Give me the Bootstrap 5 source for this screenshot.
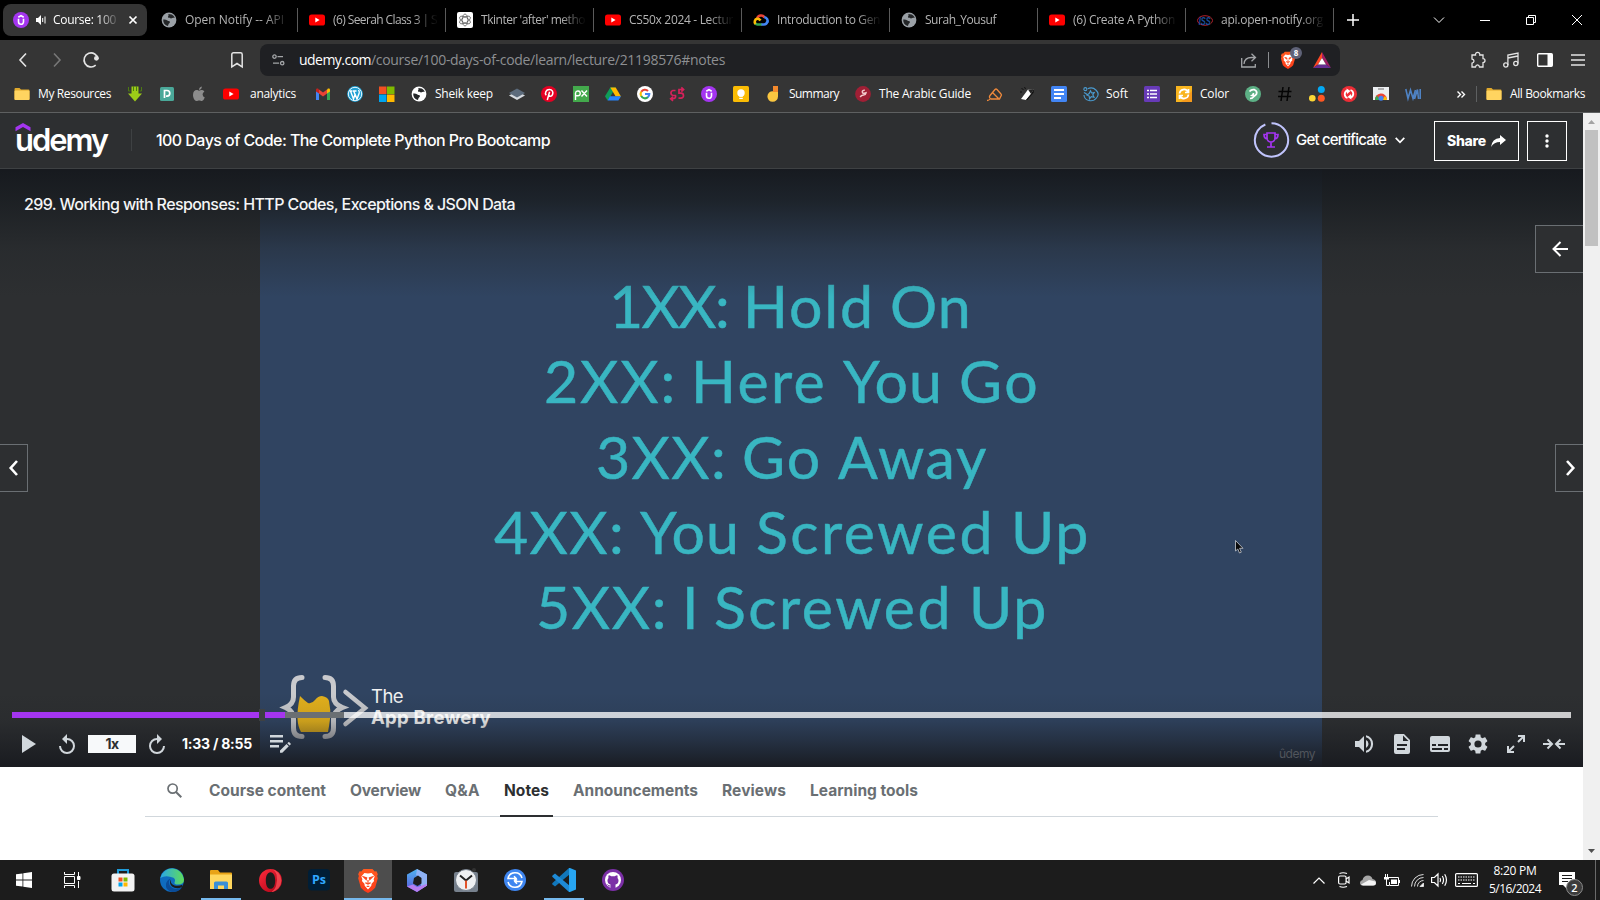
<!DOCTYPE html>
<html lang="en">
<head>
<meta charset="utf-8">
<title>Course: 100 Days of Code</title>
<link href="https://cdn.jsdelivr.net/npm/bootstrap@5.3.0/dist/css/bootstrap.min.css" rel="stylesheet">
<style>
body{width:1600px;height:900px;overflow:hidden;font-family:"Open Sans","Noto Sans",sans-serif;font-size:12px;line-height:16px;background:#fff}
svg{display:block;flex:none;overflow:visible}
.fit{white-space:nowrap;display:block;flex:none}
.line-ic{fill:none;stroke:currentColor}
/* pixel steps for start margins */
.m5{margin-left:5px}.m7{margin-left:7px}.m8{margin-left:8px}.m10{margin-left:10px}.m11{margin-left:11px}
.m13{margin-left:13px}.m14{margin-left:14px}.m15{margin-left:15px}.m16{margin-left:16px}.m17{margin-left:17px}
.m18{margin-left:18px}.m19{margin-left:19px}.m20{margin-left:20px}.m21{margin-left:21px}.m22{margin-left:22px}.m23{margin-left:23px}
.m24{margin-left:24px}.m26{margin-left:26px}.m36{margin-left:36px}.m75{margin-left:75px}.m130{margin-left:130px}.m132{margin-left:132px}
/* tab strip */
.tabstrip{height:40px;background:#000;color:#b4b4b4}
.tab{width:148px;height:40px;padding-left:12px;position:relative}
.tab::after{content:"";position:absolute;right:-1px;top:8px;width:1px;height:24px;background:#5a5a5a}
.tab .fade-text{width:104px;margin-left:8px;overflow:hidden;-webkit-mask-image:linear-gradient(90deg,#000 80px,rgba(0,0,0,.08) 102px)}
.tab-active{width:144px;height:32px;margin:0 2px 0 3px;background:#353535;border-radius:8px;color:#fff;padding-left:10px}
.tab-active .fade-text{width:66px;margin-left:6px;overflow:hidden;-webkit-mask-image:linear-gradient(90deg,#000 44px,rgba(0,0,0,.15) 64px)}
.win{color:#fff}
/* toolbar */
.toolbar{height:40px;background:#353535;color:#e4e4e4}
.urlbar{width:1080px;height:32px;border-radius:8px;background:#1f2023;font-size:14px;color:#8d8f92;padding:0 9px 0 12px}
.dim{color:#777}
.soft{color:#a3a5a8}
.tick{width:1px;height:16px;background:#8b8d90;margin:0 11px 0 12px}
.shield{margin-right:17px}
.count{left:10px;top:-4px;width:12px;height:12px;background:#5f6278;color:#fff;font-size:8px;font-weight:700;line-height:12px}
.marks{height:32px;background:#353535;color:#fff;padding:0 15px 4px 14px}
.marks .gp{margin-right:16px}
.marks .fit{margin-left:8px;margin-right:16px}
.marks .fit.wide{margin:0 19px 0 11px}
.marks .fit.last{margin-right:0}
.more{margin-right:11px}
.bar{width:1px;height:16px;background:#5e6061;margin-right:9px}
.seam{height:1px;background:#5e6061}
.grey{color:#9aa0a6}
/* course page */
.page-col{width:1583px;height:747px;font-family:Inter,"Liberation Sans",sans-serif}
.course-head{height:56px;background:#2d2f31;border-bottom:1px solid #3e4143;color:#fff;font-size:16px;font-weight:500;line-height:20px;padding-bottom:1px}
.cert{font-size:15px}
.brand{width:92px;height:50px;position:relative;font-size:31px;font-weight:600;line-height:36px;padding-top:7px}
.brand svg{position:absolute;left:0;top:7px}
.vsep{width:1px;height:22px;background:#3e4143}
.caret{margin:0 29px 0 9px}
.box-btn{height:40px;width:40px;margin:1px 16px 0 0;border:1px solid #fff;border-radius:0;color:#fff;padding:0;font-size:15px;font-weight:800}
.box-btn.share{width:85px;margin-right:8px;font-size:14px}
.player{height:598px;background:#2d2f31;color:#fff;overflow:hidden}
.slide{width:1062px;height:598px;margin-left:260px;background:#304461;padding-top:99px;color:#39b6c2;font-family:Lato,sans-serif;font-size:59px;line-height:75.25px;-webkit-text-stroke:.5px #39b6c2}
.shade{left:0;right:0}
.shade-t{top:0;height:128px;background:linear-gradient(rgba(22,25,30,.97),rgba(26,30,34,.85) 25%,rgba(34,38,42,.4) 62%,rgba(45,47,49,0))}
.shade-b{bottom:0;height:74px;background:linear-gradient(rgba(24,26,31,0),rgba(24,26,31,.12) 38%,rgba(24,26,31,.45) 64%,rgba(24,26,31,.95))}
.lecture{left:24px;top:25px;font-size:16px;font-weight:500;line-height:20px;color:#f4f5f6}
.edge{background:#2d2f31;border:1px solid #6a6f73;height:48px;border-radius:0}
.edge-back{right:0;top:56px;width:48px;border-right:0}
.edge-l{left:0;top:275px;width:28px;border-left:0}
.edge-r{right:0;top:275px;width:28px;border-right:0;padding-left:10px}
.pointer{left:1235px;top:371px}
.brew{left:283px;top:505px;color:#f2f2f2;font-size:18.5px;line-height:21px}
.brew-name{margin:12px 0 0 2px}
.track{left:12px;right:12px;top:543px;height:6px}
.track i{display:block;height:6px}
.track .done{background:#a435f0}
.track .knob{height:12px;background:#3e4143}
.track .buffer{background:#6a6f73}
.track .rest{background:rgba(255,255,255,.76)}
.controls{left:0;right:0;top:563px;height:24px;color:#d1d7dc;font-size:14px;font-weight:700}
.rate{width:48px;height:18px;background:#f7f9fa;color:#2d2f31;line-height:18px}
.shrink{margin:0 18px}
.wm{left:1279px;top:578px;font-size:12px;line-height:14px;color:#51555c}
.subtabs{width:1293px;margin-left:145px;height:50px;border-bottom:1px solid #d1d7dc;color:#6a6f73;font-size:15.5px;font-weight:700;line-height:20px;padding:14px 0 0 22px}
.subtabs .fit{margin-right:24px}
.subtabs svg{margin:2px 27px 0 0}
.subtabs .on{color:#2d2f31}
.subtabs .on::after{content:"";position:absolute;left:-4px;right:-4px;top:34px;height:2px;background:#2d2f31}
/* scrollbar */
.sbar{width:17px;height:747px;background:#f0f0f0}
.sbar .up{margin:7px 0 6px}
.sbar .down{margin-bottom:7px}
.thumb{width:13px;height:116px;background:#c1c1c1}
/* taskbar */
.taskbar{height:40px;background:#1c1c1c;color:#fff}
.app{width:48px;height:40px;position:relative;margin-left:1px}
.app.sys{margin-left:0}
.app.first{margin-left:3px}
.app.run::after{content:"";position:absolute;left:4px;right:4px;bottom:0;height:2px;background:#76b9ed}
.app.cur{background:#4d4d4d}
.app.cur::after{left:0;right:0}
.clock{width:60px;line-height:18px}
.notes-ic{margin:0 20px 0 14px}
.notes-n{left:7px;top:7px;width:17px;height:17px;background:#3c3c3c;border:1px solid #8b8b8b;font-size:11px;font-weight:600;line-height:15px}
.peek{width:1px;height:40px;background:#6a6a6a;margin-right:4px}
</style>
</head>
<body>
<svg width="0" height="0" class="position-absolute">
<defs>
<symbol id="yt" viewBox="0 0 16 16"><rect y="2.4" width="16" height="11.2" rx="2.6" fill="#f00"/><path d="M6.3 5.5v5l4.3-2.5z" fill="#fff"/></symbol>
<symbol id="globe" viewBox="0 0 16 16"><circle cx="8" cy="8" r="7.4" fill="currentColor"/><path d="M2.2 7.6c1.8-.2 3.2.1 4.2 1 1 .8 2.300.2 2.500 1.400.2 1.300-1.300 1.200-1.500 2.400-.1.700-.3 1.300-.9 1.600C3.800 13.200 2 11 2.200 7.600zM7.200 2.100l3.600.5c1.500.8 2.500 1.900 2.900 3.300-1.200-.3-2.400-.3-3.200.4-.9.700-.9-.8-2-.6-1.400.3-1.900-.7-1.300-1.500.5-.6.400-1.300 0-2.100z" fill="#242628"/></symbol>
<symbol id="folder" viewBox="0 0 16 16"><path d="M.5 3q0-1 1-1h4l1.500 1.500h7.500q1 0 1 1V13q0 1-1 1h-13q-1 0-1-1z" fill="#e0a92c"/><path d="M.5 5.500q0-1 1-1h13q1 0 1 1V13q0 1-1 1h-13q-1 0-1-1z" fill="#ffd460"/></symbol>
<symbol id="udm" viewBox="0 0 16 16"><circle cx="8" cy="8" r="8" fill="#a435f0"/><path d="M5.300 5.200L8 3.600l2.700 1.600M5.500 6.700v3.100a2.500 2.500 0 0 0 5 0V6.700" fill="none" stroke="#fff" stroke-width="1.600"/></symbol>
<linearGradient id="lion" x2="0" y2="1"><stop stop-color="#ff5a1f"/><stop offset="1" stop-color="#fb3a1a"/></linearGradient>
<symbol id="brave" viewBox="0 0 24 28"><path d="M7 1h10l2.500 3 2-.3L23 7l-.8 2 .8 2.500-3 10.500q-3 3.500-8 6-5-2.500-8-6L1 11.500 1.800 9 1 7l1.500-3.300 2 .3z" fill="url(#lion)"/><path d="M8 5.500l4 .7 4-.7 3.500 4-1.200 3 .5 2-2.800 3-.3 2.500L12 24l-3.700-4-.3-2.500-2.800-3 .5-2-1.200-3z" fill="#fff"/><path d="M7 10l3.500 1-.5 2zM17 10l-3.500 1 .5 2zM12 13.500v3M9 16.500l3 1.500 3-1.500M10.500 20.500h3" stroke="#fb4a1f" stroke-width="1.300" fill="#fb4a1f"/></symbol>
</defs>
</svg>

<div class="tabstrip d-flex align-items-center">
  <div class="tab-active d-flex align-items-center">
    <svg width="16" height="16"><use href="#udm"/></svg>
    <svg class="m7" width="11" height="12" viewBox="0 0 11 12"><path d="M0 4h2l3-3v10L2 8H0z" fill="#fff"/><path d="M6.700 4v4M9 2.500v7" stroke="#fff" fill="none"/></svg>
    <div class="fade-text"><span class="fit" data-w="63">Course: 100</span></div>
    <svg class="line-ic m10" width="8" height="8" viewBox="0 0 8 8" stroke-width="1.700"><path d="M.5.5l7 7M7.500.5l-7 7"/></svg>
  </div>
  <div class="tab d-flex align-items-center"><svg class="grey" width="16" height="16"><use href="#globe"/></svg><div class="fade-text"><span class="fit" data-w="99">Open Notify -- API</span></div></div>
  <div class="tab d-flex align-items-center"><svg width="16" height="16"><use href="#yt"/></svg><div class="fade-text"><span class="fit" data-w="104">(6) Seerah Class 3 | S</span></div></div>
  <div class="tab d-flex align-items-center"><svg width="16" height="16" viewBox="0 0 16 16"><rect width="16" height="16" rx="2" fill="#fff"/><g fill="none" stroke="#444" stroke-width=".65"><ellipse cx="8" cy="8" rx="2.800" ry="6"/><ellipse cx="8" cy="8" rx="2.800" ry="6" transform="rotate(60 8 8)"/><ellipse cx="8" cy="8" rx="2.800" ry="6" transform="rotate(120 8 8)"/></g></svg><div class="fade-text"><span class="fit" data-w="104">Tkinter 'after' metho</span></div></div>
  <div class="tab d-flex align-items-center"><svg width="16" height="16"><use href="#yt"/></svg><div class="fade-text"><span class="fit" data-w="104">CS50x 2024 - Lectur</span></div></div>
  <div class="tab d-flex align-items-center"><svg width="16" height="16" viewBox="0 0 16 16" fill="none" stroke-width="2.600"><path d="M4.300 6.200A4 4 0 0 1 11.500 5.500" stroke="#ea4335"/><path d="M11.200 5.200a3.600 3.600 0 0 1 3 5.300" stroke="#4285f4"/><path d="M14.300 9.500q-.6 3-3.300 3H8" stroke="#4285f4"/><path d="M8.500 12.500H4.500q-1.500 0-2.400-1.200" stroke="#34a853"/><path d="M2.500 12A3.200 3.200 0 0 1 4 6.800q2-.3 3.500 1.800" stroke="#fbbc05"/></svg><div class="fade-text"><span class="fit" data-w="103">Introduction to Gen</span></div></div>
  <div class="tab d-flex align-items-center"><svg class="grey" width="16" height="16"><use href="#globe"/></svg><div class="fade-text"><span class="fit" data-w="71">Surah_Yousuf</span></div></div>
  <div class="tab d-flex align-items-center"><svg width="16" height="16"><use href="#yt"/></svg><div class="fade-text"><span class="fit" data-w="102">(6) Create A Python</span></div></div>
  <div class="tab d-flex align-items-center"><svg width="16" height="16" viewBox="0 0 16 16"><ellipse cx="8" cy="8.500" rx="7.500" ry="4.800" fill="none" stroke="#b3202c"/><text x="1.800" y="12.500" font-size="11" font-weight="700" font-style="italic" fill="#1c4f9c" textLength="12" lengthAdjust="spacingAndGlyphs" font-family="Liberation Sans">ISS</text></svg><div class="fade-text"><span class="fit" data-w="102">api.open-notify.org</span></div></div>
  <svg class="line-ic win m14" width="12" height="12" viewBox="0 0 12 12" stroke-width="1.500"><path d="M6 0v12M0 6h12"/></svg>
  <svg class="line-ic win m75" width="10" height="6" viewBox="0 0 10 6"><path d="M0 .5l5 5 5-5"/></svg>
  <svg class="line-ic win m36" width="10" height="10" viewBox="0 0 10 10"><path d="M0 5.500h10"/></svg>
  <svg class="line-ic win m36" width="10" height="10" viewBox="0 0 10 10"><path d="M.5 2.500h7v7h-7zM2.500 2.500v-2h7v7h-2"/></svg>
  <svg class="line-ic win m36" width="10" height="10" viewBox="0 0 10 10"><path d="M0 0l10 10M10 0L0 10"/></svg>
</div>

<div class="toolbar d-flex align-items-center">
  <svg class="line-ic m19" width="8" height="14" viewBox="0 0 8 14" stroke-width="1.600"><path d="M7 .5L1 7l6 6.500"/></svg>
  <svg class="line-ic m26 dim" width="8" height="14" viewBox="0 0 8 14" stroke-width="1.600"><path d="M1 .5L7 7l-6 6.500"/></svg>
  <svg class="line-ic m22" width="16" height="16" viewBox="0 0 16 16" stroke-width="1.600"><path d="M12.700 13.200A7 7 0 1 1 15 7"/><circle cx="13.400" cy="6.300" r="1.600" fill="currentColor"/></svg>
  <svg class="line-ic m132" width="12" height="16" viewBox="0 0 12 16" stroke-width="1.500"><path d="M.8 2.500q0-1.700 1.700-1.700h7q1.700 0 1.700 1.700v12.300L6 11.500.8 14.800z"/></svg>
  <div class="urlbar d-flex align-items-center m17">
    <svg class="line-ic soft" width="13" height="12" viewBox="0 0 13 12" stroke-width="1.300"><circle cx="2.500" cy="2.600" r="1.700"/><path d="M5.500 2.600H11M1 9.200h6"/><circle cx="10.200" cy="9.200" r="1.700"/></svg>
    <span class="fit text-white m14" data-w="72">udemy.com</span><span class="fit" data-w="354">/course/100-days-of-code/learn/lecture/21198576#notes</span>
    <svg class="line-ic soft ms-auto" width="15" height="15" viewBox="0 0 15 15" stroke-width="1.300"><path d="M.7 5v9h13.600v-3M3 11q.5-6.500 7.500-6.500h4M10.500.8l4 3.700-4 3.700"/></svg>
    <span class="tick"></span>
    <span class="position-relative shield"><svg width="16" height="18"><use href="#brave"/></svg>
      <span class="count position-absolute rounded-circle text-center">8</span></span>
    <svg width="18" height="16" viewBox="0 0 18 16"><path d="M9 0v6L5 12.500 0 16z" fill="#ff4724"/><path d="M9 0l9 16-5-3.500L9 6z" fill="#9e1f63"/><path d="M0 16l5-3.500h8l5 3.500z" fill="#662d91"/><path d="M9 6l4 6.500H5z" fill="#fff"/></svg>
  </div>
  <svg class="line-ic m130" width="16" height="16" viewBox="0 0 16 16" stroke-width="1.300"><path d="M2 3h3.500a2.200 2.200 0 1 1 4.300 0H13v3.600a2 2 0 1 1 0 4V15H9.500q-.3-2.200-2-2.200T5.500 15H2v-3.800q2-.3 2-2.100T2 7z"/></svg>
  <svg class="line-ic m17" width="16" height="16" viewBox="0 0 16 16" stroke-width="1.300"><circle cx="2.800" cy="13" r="2.100"/><circle cx="12.800" cy="11.500" r="2.100"/><path d="M4.900 13V3L15 1v10.500M4.900 6L15 4"/></svg>
  <svg class="m18" width="16" height="14" viewBox="0 0 16 14"><rect x=".7" y=".7" width="14.600" height="12.600" rx="1" fill="none" stroke="#fff" stroke-width="1.400"/><path d="M10.500 1H15v12h-4.500z" fill="#fff"/></svg>
  <svg class="line-ic m18" width="14" height="12" viewBox="0 0 14 12" stroke-width="1.300"><path d="M0 1h14M0 6h14M0 11h14"/></svg>
</div>

<div class="marks d-flex align-items-center">
  <svg width="16" height="16"><use href="#folder"/></svg><span class="fit" data-w="73">My Resources</span>
  <svg class="gp" width="16" height="16" viewBox="0 0 16 16"><path d="M4.500.5h7v7H15L8 15.500 1 7.500h3.500z" fill="#9ccc18"/><path d="M1.500 1v4h2M14.500 1v4h-2M6.500 0v5M9.500 0v5" stroke="#4c7a12" fill="none"/></svg>
  <svg class="gp" width="16" height="16" viewBox="0 0 16 16"><rect x="1" y="1" width="14" height="14" rx="1.500" fill="#4aa899"/><path d="M5.500 12V4.500H8a2.800 2.800 0 0 1 0 5.600H7" fill="none" stroke="#fff" stroke-width="1.700"/></svg>
  <svg class="gp" width="16" height="16" viewBox="0 0 16 16" fill="#8c8c8c"><path d="M8 4.800c1-.4 2-.9 3.200-.7q1.400.2 2.200 1.400-2 1.300-1.800 3.300.3 2 2.200 2.800Q12.500 15 11 15c-1.200 0-1.600-.6-2.800-.6S6.500 15 5.500 15C3.500 15 2 11.700 2 9c0-3 1.700-4.900 3.700-4.900 1 0 1.700.6 2.300.7zM10.800.5Q11 3.300 8 4 8 1.300 10.800.5z"/></svg>
  <svg width="16" height="16"><use href="#yt"/></svg><span class="fit wide" data-w="46">analytics</span>
  <svg class="gp" width="16" height="16" viewBox="0 0 16 16"><path d="M1 4v10h3V6.500z" fill="#4285f4"/><path d="M15 4v10h-3V6.500z" fill="#34a853"/><path d="M4 3.500l4 3 4-3v4l-4 3-4-3z" fill="#ea4335"/><path d="M1 3.800Q1 2 3 2.600l1 .9v4L1 5.400z" fill="#c5221f"/><path d="M15 3.800Q15 2 13 2.600l-1 .9v4l3-2.100z" fill="#fbbc04"/></svg>
  <svg class="gp" width="16" height="16" viewBox="0 0 16 16"><circle cx="8" cy="8" r="7.900" fill="#1f9fd4"/><circle cx="8" cy="8" r="6.700" fill="none" stroke="#fff" stroke-width=".9"/><path d="M2.500 5h3M3.500 5l3 8L8 8.500 6.700 5M6 5h3.500M8 8l2 5 2.200-6q.3-1.300-.7-3" fill="none" stroke="#fff" stroke-width="1.400"/></svg>
  <svg class="gp" width="16" height="16" viewBox="0 0 16 16"><path d="M0 .5h7.500V8H0z" fill="#f25022"/><path d="M8 .5h7.500V8H8z" fill="#7fba00"/><path d="M0 8.500h7.500V16H0z" fill="#00a4ef"/><path d="M8 8.500h7.500V16H8z" fill="#ffb900"/></svg>
  <svg class="text-white" width="16" height="16"><use href="#globe"/></svg><span class="fit" data-w="58">Sheik keep</span>
  <svg class="gp" width="16" height="16" viewBox="0 0 16 16"><path d="M0 9.500L8 5l8 4.500L8 14z" fill="#d6dbe0"/><path d="M0 7l8-4.500L16 7l-8 4.500z" fill="#5c6b7c"/></svg>
  <svg class="gp" width="16" height="16" viewBox="0 0 16 16"><circle cx="8" cy="8" r="8" fill="#e60023"/><path d="M5.200 9.200C3.500 7 5 3.600 8.300 3.600c3 0 4.300 2.500 3.200 5-1 2.200-3.200 2-3.700.8M8.600 5.800L6.300 14" fill="none" stroke="#fff" stroke-width="1.500"/></svg>
  <svg class="gp" width="16" height="16" viewBox="0 0 16 16"><rect width="16" height="16" fill="#43a94c"/><path d="M2.500 14V7a2.400 2.400 0 1 1 2.400 2.800H2.500M8.500 4.500l5.500 6M14 4.500l-5.500 6" fill="none" stroke="#fff" stroke-width="1.400"/></svg>
  <svg class="gp" width="16" height="16" viewBox="0 0 16 16"><path d="M5.300 1.500h5.400L5 11l-2.400 3.500L0 10.300z" fill="#0f9d58"/><path d="M5.300 1.500h5.400l5.300 9h-5.300z" fill="#ffba00"/><path d="M5 10.300h11l-2.600 4.200H2.600z" fill="#2684fc"/></svg>
  <svg class="gp" width="16" height="16" viewBox="0 0 16 16"><circle cx="8" cy="8" r="8" fill="#fff"/><g fill="none" stroke-width="2.100"><path d="M4.300 5.800A4.300 4.300 0 0 1 11 4.900" stroke="#ea4335"/><path d="M4.200 10.100a4.300 4.300 0 0 1 0-4.300" stroke="#fbbc05"/><path d="M11 11.100a4.300 4.300 0 0 1-6.800-1" stroke="#34a853"/><path d="M8 8h4.300q0 2-1.500 3.200" stroke="#4285f4"/></g></svg>
  <svg class="gp" width="16" height="16" viewBox="0 0 16 16" fill="none" stroke="#d6215b" stroke-width="1.700"><path d="M6.500 4.500H3.800a2.600 2.600 0 0 0 0 5H6.500q.8 3.200-3 3.200H2M4 10.800l-2.300 2L4 14.800M14.500 3.500H10v3.700h2a2.500 2.500 0 0 1 0 5H9.500M12.300 1.300l2.300 2.200-2.300 2.200"/></svg>
  <svg class="gp" width="16" height="16"><use href="#udm"/></svg>
  <svg class="gp" width="16" height="16" viewBox="0 0 16 16"><rect width="16" height="16" rx="1.500" fill="#fbbc04"/><circle cx="8" cy="7" r="3.700" fill="#fff"/><path d="M6.200 9h3.600v1.800H6.200zM6.200 11.700h3.600V13H6.200z" fill="#fff"/></svg>
  <svg width="16" height="16" viewBox="0 0 16 16"><path d="M8 0h5v10.500A5.300 5.300 0 1 1 8 5.200z" fill="#fbc740"/><path d="M8 0h5v6H8z" fill="#f58a2c"/></svg><span class="fit" data-w="50">Summary</span>
  <svg width="16" height="16" viewBox="0 0 16 16"><circle cx="8" cy="8" r="7.900" fill="#a01f35"/><path d="M9.800 4.300Q7.300 4 7.300 5.800T9.300 7.200l1.700-.4q-.3 2-2.500 2.300-2.300.3-3.300 1.900" fill="none" stroke="#f3c9cc" stroke-width="1.500"/></svg><span class="fit" data-w="92">The Arabic Guide</span>
  <svg class="gp" width="16" height="16" viewBox="0 0 16 16" fill="none" stroke="#f08a3c" stroke-width="1.300"><path d="M3 9.500L8 3.500q1-1 2 0l4 4.500q1 1 0 2L12.500 13H4q-2.500-1.500-1-3.500zM5.500 6.500l6 6M0 14.500q2 0 3-1.500"/></svg>
  <svg class="gp" width="16" height="16" viewBox="0 0 16 16"><path d="M9 3.500l6-.5-3 5-5 6-5-1z" fill="#fff"/><path d="M12 8l3-5-.3 3.500L8.500 14H7z" fill="#111"/><path d="M9 3.500l6-.5-3 5z" fill="#222"/><path d="M2.500 2l2 2M5.500 1l1 2M1 6h2" stroke="#111"/></svg>
  <svg class="gp" width="16" height="16" viewBox="0 0 16 16"><rect width="16" height="16" rx="1.500" fill="#4285f4"/><path d="M3 4h10M3 8h10M3 12h7" stroke="#fff" stroke-width="1.800"/></svg>
  <svg width="15" height="16" viewBox="0 0 16 16" fill="none" stroke="#4a9bd0" stroke-width="1.200"><path d="M5 2.500Q10 0 14 4t.5 8q-3 4-8 3T1 9"/><circle cx="2.500" cy="2.800" r="1.600"/><path d="M8 4.500l1.200 2.400 2.800-.4-1.600 2.400 1.400 2.600-3-.6L7 13.200l-.4-3L4 9l2.600-1.500zM1 6.500l3 1.500"/></svg><span class="fit" data-w="22">Soft</span>
  <svg class="gp" width="16" height="16" viewBox="0 0 16 16"><rect width="16" height="16" rx="1.500" fill="#673ab7"/><path d="M3 4.500h2M3 8h2M3 11.500h2M6 4.500h7M6 8h7M6 11.500h7" stroke="#fff" stroke-width="1.600"/></svg>
  <svg width="16" height="16" viewBox="0 0 16 16"><rect width="16" height="16" fill="#f9b51f"/><path d="M0 16h5L16 5v11z" fill="#f69a1c"/><path d="M3.500 7.500A4.500 4.500 0 0 1 12 6M12.500 8.500A4.500 4.500 0 0 1 4 10M12.500 3v3.500H9M3.500 13V9.500H7" fill="none" stroke="#fff" stroke-width="1.700"/></svg><span class="fit" data-w="29">Color</span>
  <svg class="gp" width="16" height="16" viewBox="0 0 16 16"><circle cx="8" cy="8" r="8" fill="#5db085"/><path d="M4.500 5.500Q6.500 3 9.500 3.700 12.500 5 11.500 8 10 10.500 7 9.500q1.500-.8 1.500-2.500M9.500 10q-2 2.500-4.500 2.500" fill="none" stroke="#fff" stroke-width="1.700"/></svg>
  <svg class="gp" width="16" height="16" viewBox="0 0 16 16"><path d="M6 1L4 15M12 1l-2 14M1.500 5.500h13M1 10.500h13" stroke="#050505" stroke-width="1.500"/></svg>
  <svg class="gp" width="16" height="16" viewBox="0 0 16 16"><circle cx="12.300" cy="3.500" r="3.500" fill="#03a9f4"/><circle cx="3.300" cy="12.300" r="3.300" fill="#fdd835"/><circle cx="12.300" cy="12.300" r="3.500" fill="#ff5722"/></svg>
  <svg class="gp" width="16" height="16" viewBox="0 0 16 16"><circle cx="8" cy="8" r="8" fill="#ee2d36"/><path d="M6.500 12A4 4 0 0 1 6 4.600M9.500 4a4 4 0 0 1 .5 7.400" fill="none" stroke="#fff" stroke-width="1.800"/><path d="M5.500 2.500l4 2.500-3.500 3zM10.500 13.500l-4-2.500L10 8z" fill="#fff"/></svg>
  <svg class="gp" width="16" height="16" viewBox="0 0 16 16"><path d="M0 1h16v13H0z" fill="#eceff1"/><path d="M5 3h6" stroke="#999" stroke-width="1.500"/><path d="M2 14a6 6 0 0 1 12-1z" fill="#ea4335"/><path d="M2 14q0-3 2-4.500L7 14z" fill="#34a853"/><path d="M9 14l3-4q2 2 2 4z" fill="#fbbc05"/><circle cx="8" cy="12.300" r="2.500" fill="#4285f4"/></svg>
  <svg width="16" height="16" viewBox="0 0 16 16" fill="none" stroke="#4f83c4" stroke-width="1.600"><path d="M.8 3l2.200 9.500L5.500 4 8 12.500 10.500 4M9.500 13l3-9.500 1 9.500M15.200 3v10"/></svg>
  <svg class="line-ic ms-auto more" width="8" height="7" viewBox="0 0 8 7" stroke-width="1.400"><path d="M.5.500l3 3-3 3M4.500.5l3 3-3 3"/></svg>
  <span class="bar"></span>
  <svg width="16" height="16"><use href="#folder"/></svg><span class="fit last" data-w="75">All Bookmarks</span>
</div>
<div class="seam"></div>

<div class="d-flex">
<main class="page-col">
  <header class="course-head d-flex align-items-center">
    <div class="brand m15"><svg width="15" height="9" viewBox="0 0 15 9"><path d="M7.500 0L15 4.300V8.200L7.500 4 0 8.200V4.300z" fill="#a435f0" transform="translate(.5 1)"/></svg><span class="fit" data-w="92">udemy</span></div>
    <span class="vsep m24"></span>
    <span class="fit m24" data-w="394">100 Days of Code: The Complete Python Pro Bootcamp</span>
    <svg class="ms-auto" width="36" height="36" viewBox="0 0 36 36" fill="none"><circle cx="18.500" cy="18" r="16.700" stroke="#c0c4fc" stroke-width="2" stroke-dasharray="98 7" transform="rotate(-90 18.500 18)"/><path d="M14 11h8v5a4 4 0 0 1-8 0zM14 12.500H11q0 4.500 4 4.500M22 12.500h3q0 4.500-4 4.500M18 20v4.500M14 25h8" stroke="#a435f0" stroke-width="1.700"/></svg>
    <span class="fit cert m7" data-w="90">Get certificate</span>
    <svg class="line-ic caret" width="10" height="7" viewBox="0 0 10 7" stroke-width="1.700"><path d="M.7.800L5 5.300 9.300.8"/></svg>
    <button class="btn box-btn share d-flex align-items-center justify-content-center"><span class="fit" data-w="39">Share</span><svg class="m5" width="15" height="12" viewBox="0 0 15 12"><path d="M9 0l6 5-6 5V7Q3 7 0 12 1 3.500 9 3z" fill="#fff"/></svg></button>
    <button class="btn box-btn d-flex align-items-center justify-content-center"><svg width="4" height="14" viewBox="0 0 4 14" fill="#fff"><circle cx="2" cy="2" r="1.700"/><circle cx="2" cy="7" r="1.700"/><circle cx="2" cy="12" r="1.700"/></svg></button>
  </header>

  <section class="player position-relative">
    <div class="slide">
      <div class="d-flex"><span class="fit" data-l="349" data-w="119">1XX:</span> <span class="fit" data-l="15" data-w="132">Hold</span> <span class="fit" data-l="15" data-w="82">On</span></div>
      <div class="d-flex"><span class="fit" data-l="284" data-w="133">2XX:</span> <span class="fit" data-l="14" data-w="136">Here</span> <span class="fit" data-l="16" data-w="100">You</span> <span class="fit" data-l="16" data-w="81">Go</span></div>
      <div class="d-flex"><span class="fit" data-l="336" data-w="131">3XX:</span> <span class="fit" data-l="15" data-w="80">Go</span> <span class="fit" data-l="16" data-w="150">Away</span></div>
      <div class="d-flex"><span class="fit" data-l="234" data-w="131">4XX:</span> <span class="fit" data-l="15" data-w="100">You</span> <span class="fit" data-l="16" data-w="239">Screwed</span> <span class="fit" data-l="16" data-w="79">Up</span></div>
      <div class="d-flex"><span class="fit" data-l="276" data-w="132">5XX:</span> <span class="fit" data-l="14" data-w="17">I</span> <span class="fit" data-l="15" data-w="239">Screwed</span> <span class="fit" data-l="16" data-w="79">Up</span></div>
    </div>
    <div class="brew position-absolute d-flex">
      <svg width="86" height="70" viewBox="0 0 86 70" fill="none" stroke="#c9cacd" stroke-width="5" stroke-linecap="round"><path d="M19 3.500Q10.500 3.500 10.500 12v11q0 7-8 10.500Q10.500 37 10.500 45v9q0 8.500 8.500 8.500M42 3.500q8.500 0 8.500 8.500v11q0 7 9 10.500Q50.500 37 50.500 45v9q0 8.500-8.500 8.500"/><path d="M62.500 18l19.500 16-19.500 16" stroke-width="4.500"/><path d="M17 22q5 5 8 7 4 1 7-3t7-4q6 1 7 5 2 9 1 18-1 8-2 13H18q-3-5-3.500-13-.5-9 2.500-23z" fill="#e2b01c" stroke="none"/></svg>
      <div class="brew-name"><span class="fit" data-w="32">The</span><span class="fit fw-bold" data-w="120">App Brewery</span></div>
    </div>
    <div class="shade shade-t position-absolute"></div>
    <div class="shade shade-b position-absolute"></div>
    <div class="wm position-absolute"><span class="fit" data-w="36">ûdemy</span></div>
    <div class="lecture position-absolute"><span class="fit" data-w="491">299. Working with Responses: HTTP Codes, Exceptions &amp; JSON Data</span></div>
    <div class="edge edge-back position-absolute d-flex align-items-center justify-content-center"><svg class="line-ic" width="16" height="16" viewBox="0 0 16 16" stroke-width="2"><path d="M16 8H2M8.500 1L1.500 8l7 7"/></svg></div>
    <div class="edge edge-l position-absolute d-flex align-items-center justify-content-center"><svg class="line-ic" width="9" height="16" viewBox="0 0 9 16" stroke-width="2.600"><path d="M8 1L1.700 8 8 15"/></svg></div>
    <div class="edge edge-r position-absolute d-flex align-items-center"><svg class="line-ic" width="9" height="16" viewBox="0 0 9 16" stroke-width="2.600"><path d="M1 1l6.300 7L1 15"/></svg></div>
    <svg class="pointer position-absolute" width="9" height="14" viewBox="0 0 9 14"><path d="M.5.500v10.500l2.300-2 1.700 4 1.800-.8-1.700-3.900h3.400z" fill="#0a0a0a" stroke="#c8ccd2" stroke-width=".8"/></svg>

    <div class="track position-absolute d-flex align-items-center">
      <i class="done" style="width:247px"></i><i class="knob" style="width:6px"></i><i class="done" style="width:20px"></i><i class="buffer" style="width:59px"></i><i class="rest flex-fill"></i>
    </div>
    <div class="controls position-absolute d-flex align-items-center">
      <svg class="m22" width="14" height="18" viewBox="0 0 14 18" fill="currentColor"><path d="M0 0l14 9-14 9z"/></svg>
      <svg class="m23" width="16" height="20" viewBox="0 0 16 20" fill="currentColor"><path d="M8 4V0L3 5l5 5V6a6 6 0 1 1-6 6H0a8 8 0 1 0 8-8z"/></svg>
      <div class="rate d-flex justify-content-center m13"><span class="fit" data-w="13">1x</span></div>
      <svg class="m13" width="16" height="20" viewBox="0 0 16 20" fill="currentColor"><path d="M8 4V0l5 5-5 5V6a6 6 0 1 0 6 6h2a8 8 0 1 1-8-8z"/></svg>
      <span class="fit text-white m17" data-w="70">1:33 / 8:55</span>
      <svg class="m18" width="21" height="18" viewBox="0 0 21 18" fill="currentColor"><path d="M0 0h13v2.500H0zM0 5h13v2.500H0zM0 10h9v2.500H0zM10 15.500l6.500-6.500 2.300 2.300-6.500 6.500H10zM17.300 8.200l1-1q.5-.5 1 0l1.300 1.300q.5.5 0 1l-1 1z"/></svg>
      <svg class="ms-auto" width="18" height="18" viewBox="0 0 18 18" fill="currentColor"><path d="M0 6v6h4l5 5V1L4 6zM13.500 9A4.500 4.500 0 0 0 11 5v8a4.500 4.500 0 0 0 2.500-4zM11 .2v2.100a7 7 0 0 1 0 13.400v2.100a9 9 0 0 0 0-17.600z"/></svg>
      <svg class="m21" width="16" height="20" viewBox="0 0 16 20" fill="currentColor"><path d="M2 0h8l6 6v12q0 2-2 2H2q-2 0-2-2V2Q0 0 2 0zM9 1.500V7h5.500zM3 10v2h10v-2zM3 14v2h8v-2z" fill-rule="evenodd"/></svg>
      <svg class="m20" width="20" height="16" viewBox="0 0 20 16" fill="currentColor"><path d="M2 0h16q2 0 2 2v12q0 2-2 2H2q-2 0-2-2V2Q0 0 2 0zM2 8v2h4V8zM2 12v2h10v-2zM14 12v2h4v-2zM8 8v2h10V8z" fill-rule="evenodd"/></svg>
      <svg class="m16" width="24" height="24" viewBox="0 0 24 24" fill="currentColor"><path d="M19.140 12.940c.04-.3.060-.61.060-.94 0-.32-.02-.64-.07-.94l2.030-1.580c.18-.14.230-.41.120-.61l-1.920-3.320c-.12-.22-.37-.29-.59-.22l-2.390.96c-.5-.38-1.030-.7-1.620-.94l-.36-2.540c-.04-.24-.24-.41-.48-.41h-3.840c-.24 0-.43.170-.47.410l-.36 2.540c-.59.240-1.130.57-1.620.94l-2.390-.96c-.22-.08-.47 0-.59.220L2.740 8.870c-.12.210-.08.470.12.610l2.030 1.580c-.05.300-.09.630-.09.940s.02.640.07.940l-2.030 1.580c-.18.140-.23.410-.12.610l1.920 3.320c.12.220.37.290.59.220l2.390-.96c.5.380 1.030.700 1.620.940l.36 2.540c.05.240.24.410.48.410h3.840c.24 0 .44-.17.470-.41l.36-2.540c.59-.24 1.130-.56 1.620-.94l2.390.96c.22.080.47 0 .59-.22l1.920-3.320c.12-.22.070-.47-.12-.61zM12 15.600a3.600 3.600 0 1 1 0-7.200 3.600 3.600 0 0 1 0 7.200z"/></svg>
      <svg class="m17" width="18" height="18" viewBox="0 0 18 18" fill="currentColor"><path d="M11 0h7v7h-2V3.400l-4.300 4.300-1.400-1.400L14.600 2H11zM7 18H0v-7h2v3.600l4.300-4.300 1.400 1.400L3.400 16H7z"/></svg>
      <svg class="shrink" width="22" height="12" viewBox="0 0 22 12" fill="none" stroke="currentColor" stroke-width="2"><path d="M0 6h8M4.500 1.500L9 6l-4.500 4.500M22 6h-8M17.500 1.500L13 6l4.500 4.500"/></svg>
    </div>
  </section>

  <nav class="subtabs d-flex">
    <svg class="line-ic" width="15" height="15" viewBox="0 0 15 15" stroke-width="1.700"><circle cx="5.600" cy="5.600" r="4.600"/><path d="M9 9l5.300 5.300" stroke-width="2"/></svg>
    <span class="fit" data-w="117">Course content</span>
    <span class="fit" data-w="71">Overview</span>
    <span class="fit" data-w="35">Q&amp;A</span>
    <span class="fit on position-relative" data-w="45">Notes</span>
    <span class="fit" data-w="125">Announcements</span>
    <span class="fit" data-w="64">Reviews</span>
    <span class="fit" data-w="108">Learning tools</span>
  </nav>
</main>
<div class="sbar d-flex flex-column align-items-center">
  <svg class="up" width="7" height="4" viewBox="0 0 7 4"><path d="M0 4l3.500-4L7 4z" fill="#a3a3a3"/></svg>
  <div class="thumb"></div>
  <svg class="mt-auto down" width="7" height="4" viewBox="0 0 7 4"><path d="M0 0h7L3.500 4z" fill="#505050"/></svg>
</div>
</div>

<footer class="taskbar d-flex align-items-center">
  <div class="app sys d-flex align-items-center justify-content-center"><svg width="16" height="16" viewBox="0 0 16 16" fill="#fff"><path d="M0 2.300l6.500-.9v6.200H0zM7.300 1.300L16 0v7.600H7.300zM0 8.400h6.500v6.200L0 13.700zM7.300 8.400H16V16l-8.700-1.300z"/></svg></div>
  <div class="app sys d-flex align-items-center justify-content-center"><svg class="line-ic" width="16" height="16" viewBox="0 0 16 16" stroke-width="1"><path d="M.5 0v2.500h10V0M.5 16v-2.500h10V16M.5 4.500h10v7H.5zM14.500 0v4M14.500 9v7"/><path d="M13.500 4.500h2.500v3h-2.500z" fill="#fff"/></svg></div>
  <div class="app first d-flex align-items-center justify-content-center"><svg width="24" height="24" viewBox="0 0 24 24"><path d="M7 6V2h10v4" fill="none" stroke="#1f9bd8" stroke-width="2"/><rect x=".5" y="5.500" width="23" height="18" rx="2.500" fill="#f3f3f3"/><path d="M7.500 9.500h4v4h-4z" fill="#f25022"/><path d="M12.500 9.500h4v4h-4z" fill="#7fba00"/><path d="M7.500 14.500h4v4h-4z" fill="#00a4ef"/><path d="M12.500 14.500h4v4h-4z" fill="#ffb900"/></svg></div>
  <div class="app d-flex align-items-center justify-content-center"><svg width="24" height="24" viewBox="0 0 24 24"><defs><linearGradient id="e1"><stop stop-color="#2aa7e6"/><stop offset="1" stop-color="#5fdc5a"/></linearGradient></defs><circle cx="12" cy="12" r="12" fill="#0f6cbf"/><path d="M.3 10A12 12 0 0 1 24 11.500q0 5-6 5-4 0-3.500-2 1.500-3-1-4.700Q6 6.500.3 10z" fill="url(#e1)"/><path d="M10.500 10.500Q7 15 11 19q4.500 3.500 11 .500Q19 24 12 24 5 22 6 16q.7-4 4.500-5.500z" fill="#0b4c98"/><path d="M11 11.500q-1 4.500 3.500 6 4 1 8-.8l-.8 2.600Q16 21.500 12 18.500 8.500 15 11 11.500z" fill="#1c1c1c"/></svg></div>
  <div class="app run d-flex align-items-center justify-content-center"><svg width="22" height="20" viewBox="0 0 22 20"><path d="M0 1q0-1 1-1h7l2 2.500h11q1 0 1 1V18H0z" fill="#e8a317"/><path d="M0 4.500h22V19H0z" fill="#ffd75e"/><path d="M4 19v-6q0-1.500 1.500-1.500h11Q18 11.500 18 13v6h-4v-3.500H8V19z" fill="#3a8fd6"/></svg></div>
  <div class="app d-flex align-items-center justify-content-center"><svg width="23" height="23" viewBox="0 0 23 23"><defs><linearGradient id="op" x2="1" y2="1"><stop stop-color="#ff2b3c"/><stop offset="1" stop-color="#a70014"/></linearGradient></defs><path d="M11.500 0a11.500 11.500 0 1 0 0 23 11.500 11.500 0 0 0 0-23zm0 3.200c3 0 4.700 3.600 4.700 8.300s-1.700 8.300-4.700 8.300-4.700-3.600-4.700-8.300 1.700-8.300 4.700-8.300z" fill="url(#op)"/><path d="M12 .1q4 .8 5.500 5.500 1.300 5.500-.5 11.500-1.500 4.500-5 5.900A11.500 11.500 0 0 0 12 .1z" fill="#ff5a5f" opacity=".7"/></svg></div>
  <div class="app d-flex align-items-center justify-content-center"><svg width="22" height="22" viewBox="0 0 22 22"><rect width="22" height="21.500" rx="4" fill="#001e36"/><text x="4" y="15" font-size="12" font-weight="700" fill="#31a8ff" textLength="14" lengthAdjust="spacingAndGlyphs">Ps</text></svg></div>
  <div class="app run cur d-flex align-items-center justify-content-center"><svg width="22" height="25"><use href="#brave"/></svg></div>
  <div class="app d-flex align-items-center justify-content-center"><svg width="22" height="23" viewBox="0 0 22 23"><defs><linearGradient id="o3" x2="0" y2="1"><stop stop-color="#4fb4f0"/><stop offset="1" stop-color="#5a55d8"/></linearGradient></defs><path d="M11 0l10 5.500v11L11 23 1 17.500v-12z" fill="url(#o3)"/><path d="M11 0l10 5.500v11l-6 3.500V9l-5-3z" fill="#8fb2f5"/><path d="M1 17.500l6-2 4 2.500 10-3v1.500L11 23z" fill="#b67df0"/><path d="M8 9l4-2.500L15.500 9v5.500L11.500 17 7 14.500z" fill="#1c1c1c"/></svg></div>
  <div class="app d-flex align-items-center justify-content-center"><svg width="24" height="24" viewBox="0 0 24 24"><rect y="4" width="24" height="20" rx="2" fill="#77818d"/><circle cx="12" cy="12" r="10.500" fill="#eef0f2" stroke="#77818d"/><path d="M6 7.500l6 5 6-5" fill="none" stroke="#222" stroke-width="2"/><path d="M12 12.500v8" stroke="#e2532a" stroke-width="2"/><circle cx="20" cy="2" r="2" fill="#333"/></svg></div>
  <div class="app d-flex align-items-center justify-content-center"><svg width="22" height="22" viewBox="0 0 22 22" fill="none" stroke="#fff" stroke-width="1.500"><circle cx="11" cy="11" r="11" fill="#3f86f0" stroke="none"/><path d="M18 9A7.200 7.200 0 0 0 4 9.500H12M10 7.300l2.200 2.200-2.200 2.200M4 13a7.200 7.200 0 0 0 14-.5H11M13 10.300l-2.200 2.200 2.200 2.200"/></svg></div>
  <div class="app run d-flex align-items-center justify-content-center"><svg width="24" height="24" viewBox="0 0 24 24"><path d="M17 0l1 6L3 18.500l-2.500-2q-.7-.8 0-1.500z" fill="#1177bb"/><path d="M3 5.500L18 18l-1 6L.5 9q-.7-.800 0-1.500z" fill="#1e8ad6"/><path d="M17 0h1l6 2.500v19L18 24h-1z" fill="#27a5f2"/></svg></div>
  <div class="app d-flex align-items-center justify-content-center"><svg width="22" height="22" viewBox="0 0 22 22"><circle cx="11" cy="11" r="11" fill="#7b2fa6"/><circle cx="11" cy="11" r="8" fill="#fff"/><path d="M8.500 19v-3.500Q5.500 15 5.500 11.500q0-1.500 1-2.500-.4-1.400.2-2.700 1.300 0 2.500 1h3.600q1.200-1 2.500-1 .6 1.300.2 2.700 1 1 1 2.500 0 3.500-3 4V19z" fill="#7b2fa6"/><path d="M8.500 17q-2 .5-3-1.500" stroke="#7b2fa6" fill="none"/></svg></div>

  <svg class="line-ic ms-auto" width="12" height="7" viewBox="0 0 12 7" stroke-width="1.200"><path d="M.5 6.500L6 1l5.500 5.500"/></svg>
  <svg class="line-ic m13" width="12" height="16" viewBox="0 0 12 16" stroke-width="1.200"><rect x=".6" y="4" width="7.500" height="8" rx="1.500"/><path d="M8 7l3-2v6L8 9M1.500 1.500Q5 0 9 1.500M1.500 14.500q3.500 1.500 7.500 0"/></svg>
  <svg class="m10" width="16" height="11" viewBox="0 0 16 11"><path d="M3 10.500Q0 10.500 0 7.700 0 5.500 2.500 5 3.500.5 8 .5q3.500 0 4.500 3.500Q16 4.500 16 7.500t-3 3z" fill="#a7a7a7"/><path d="M1 9.500L9 5l6.500 1.500Q17 10.500 13 10.500H3z" fill="#f4f4f4"/></svg>
  <svg class="m8" width="16" height="13" viewBox="0 0 16 13" fill="none" stroke="#fff"><path d="M4.500 3.500h10v8h-9V8M15.500 6v3"/><path d="M7 5.500h6v4.500H7zM0 3h5v2.500H0z" fill="#fff" stroke="none"/><path d="M1.500 0v3M3.500 0v3M2.500 5v6.500H5"/></svg>
  <svg class="m11" width="13" height="13" viewBox="0 0 13 13" fill="none" stroke="#ddd"><path d="M.5 12.500A12 12 0 0 1 12.500.5M3.500 12.500a9 9 0 0 1 9-9M6.500 12.500a6 6 0 0 1 6-6"/><path d="M9 12.500l3.500-3.500v3.500z" fill="#fff"/></svg>
  <svg class="line-ic m7" width="17" height="14" viewBox="0 0 17 14" stroke-width="1.200"><path d="M.6 4.500h2.800L7 1v12L3.400 9.500H.6zM9 5q1.200 2 0 4M11.300 3q2.500 4 0 8M13.700 1.300q3.500 5.700 0 11.400"/></svg>
  <svg class="line-ic m7" width="23" height="14" viewBox="0 0 23 14" stroke-width="1.200"><rect x=".6" y=".6" width="21.800" height="12.800" rx="1"/><path d="M3 4h17M3 7h17" stroke-dasharray="1.500 1"/><path d="M3 10.500h2M7 10.500h9M18 10.500h2"/></svg>
  <div class="clock d-flex flex-column align-items-center m7"><span class="fit" data-w="43">8:20 PM</span><span class="fit" data-w="52">5/16/2024</span></div>
  <div class="position-relative notes-ic"><svg width="16" height="17" viewBox="0 0 16 17"><path d="M0 0h16v13H8v4l-4-4H0z" fill="#fff"/><path d="M3 3.500h10M3 6.500h10M3 9.500h6" stroke="#1c1c1c"/></svg><span class="notes-n position-absolute rounded-circle text-center">2</span></div>
  <span class="peek"></span>
</footer>

<script src="https://cdn.jsdelivr.net/npm/bootstrap@5.3.0/dist/js/bootstrap.bundle.min.js"></script>
<script>
// Spread each label's letters so that it fills the width given in data-w;
// data-l, where present, is the gap before a word of the slide.
document.querySelectorAll('.fit[data-w]').forEach(function (el) {
  el.style.letterSpacing = '0px';
  el.style.width = 'max-content';
  var want = +el.dataset.w, has = el.getBoundingClientRect().width;
  el.style.letterSpacing = ((want - has) / el.textContent.length) + 'px';
  el.style.width = want + 'px';
  if (el.dataset.l) el.style.marginLeft = el.dataset.l + 'px';
});
</script>
</body>
</html>
